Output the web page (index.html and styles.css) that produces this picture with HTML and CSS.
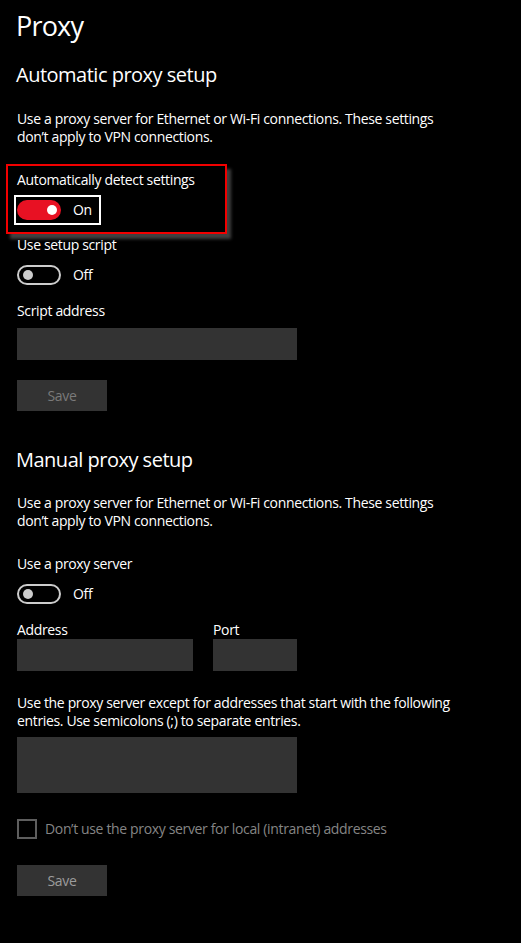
FILE: index.html
```html
<!DOCTYPE html>
<html lang="en">
<head>
<meta charset="UTF-8">
<title>Proxy</title>
<link rel="stylesheet" href="styles.css">
</head>
<body>
<div class="page">
    <h1 class="title">Proxy</h1>

    <h2 class="section">Automatic proxy setup</h2>
    <p class="desc">Use a proxy server for Ethernet or Wi-Fi connections. These settings don’t apply to VPN connections.</p>

    <div class="highlight">
        <div class="label">Automatically detect settings</div>
        <div class="focus">
            <span class="toggle on"><span class="knob"></span></span>
            <span class="state">On</span>
        </div>
    </div>

    <div class="label setup-label">Use setup script</div>
    <div class="switch-row">
        <span class="toggle"><span class="knob"></span></span>
        <span class="state">Off</span>
    </div>

    <div class="label script-label">Script address</div>
    <div class="input wide"></div>
    <button class="save">Save</button>

    <h2 class="section manual">Manual proxy setup</h2>
    <p class="desc desc2">Use a proxy server for Ethernet or Wi-Fi connections. These settings don’t apply to VPN connections.</p>

    <div class="label use-label">Use a proxy server</div>
    <div class="switch-row">
        <span class="toggle"><span class="knob"></span></span>
        <span class="state">Off</span>
    </div>

    <div class="addr-row">
        <div class="field">
            <div class="label">Address</div>
            <div class="input addr"></div>
        </div>
        <div class="field">
            <div class="label">Port</div>
            <div class="input port"></div>
        </div>
    </div>

    <p class="desc except">Use the proxy server except for addresses that start with the following entries. Use semicolons (;) to separate entries.</p>
    <div class="input wide area"></div>

    <div class="check-row">
        <span class="checkbox"></span>
        <span class="check-label">Don’t use the proxy server for local (intranet) addresses</span>
    </div>
    <button class="save save2">Save</button>
</div>
</body>
</html>
```

FILE: styles.css
```css
body{
    margin: 0;
    background: #000;
    color: #fff;
    font-family: "Open Sans", "Noto Sans", sans-serif;
    font-size: 14px;
    letter-spacing: -0.35px;
}
.page{
    padding: 9px 0 40px 17px;
}
.title{
    margin: 0 0 0 -1px;
    font-size: 27px;
    line-height: 34px;
    font-weight: 400;
    letter-spacing: -0.8px;
}
.section{
    margin: 19px 0 0 -1px;
    font-size: 20px;
    line-height: 26px;
    font-weight: 400;
    letter-spacing: -0.5px;
}
.desc{
    margin: 22px 0 0 0;
    width: 440px;
    line-height: 18px;
}
.label{
    line-height: 18px;
}

/* highlighted setting */
.highlight{
    margin: 18px 0 0 -11px;
    width: 208px;
    padding: 5px 0 7px 9px;
    border: 2px solid #f20000;
    box-shadow: 4px 5px 3px #404040;
}
.focus{
    display: inline-flex;
    align-items: center;
    margin: 6px 0 0 -3px;
    padding: 3px 7px 3px 1px;
    border: 2px solid #fff;
}

.toggle{
    position: relative;
    display: inline-block;
    box-sizing: border-box;
    width: 44px;
    height: 20px;
    border: 2px solid #ccc;
    border-radius: 10px;
}
.toggle .knob{
    position: absolute;
    left: 4px;
    top: 3px;
    width: 10px;
    height: 10px;
    border-radius: 50%;
    background: #ccc;
}
.toggle.on{
    background: #e81123;
    border-color: #e81123;
}
.toggle.on .knob{
    left: 28px;
    background: #fff;
}
.state{
    margin-left: 12px;
    line-height: 18px;
}
.switch-row{
    display: flex;
    align-items: center;
    margin-top: 11px;
}

.setup-label{ margin-top: 2px; }
.script-label{ margin-top: 17px; }

.input{
    height: 32px;
    background: #333;
}
.wide{
    width: 280px;
    margin-top: 8px;
}
.save{
    display: block;
    margin-top: 20px;
    width: 90px;
    height: 31px;
    border: none;
    background: #333;
    color: #7a7a7a;
    font-family: inherit;
    font-size: 14px;
    letter-spacing: inherit;
    padding: 0;
}

.manual{ margin-top: 36px; }
.desc2{ margin-top: 21px; }
.use-label{ margin-top: 25px; }

.addr-row{
    display: flex;
    gap: 20px;
    margin-top: 17px;
}
.addr{ width: 176px; }
.port{ width: 84px; }

.except{ margin-top: 23px; }
.area{
    margin-top: 7px;
    height: 56px;
}

.check-row{
    display: flex;
    align-items: center;
    margin-top: 26px;
}
.checkbox{
    box-sizing: border-box;
    width: 20px;
    height: 20px;
    border: 2px solid #5e5e5e;
}
.check-label{
    margin-left: 8px;
    color: #858585;
    line-height: 18px;
}
.save2{
    margin-top: 26px;
    color: #9c9c9c;
}
```
